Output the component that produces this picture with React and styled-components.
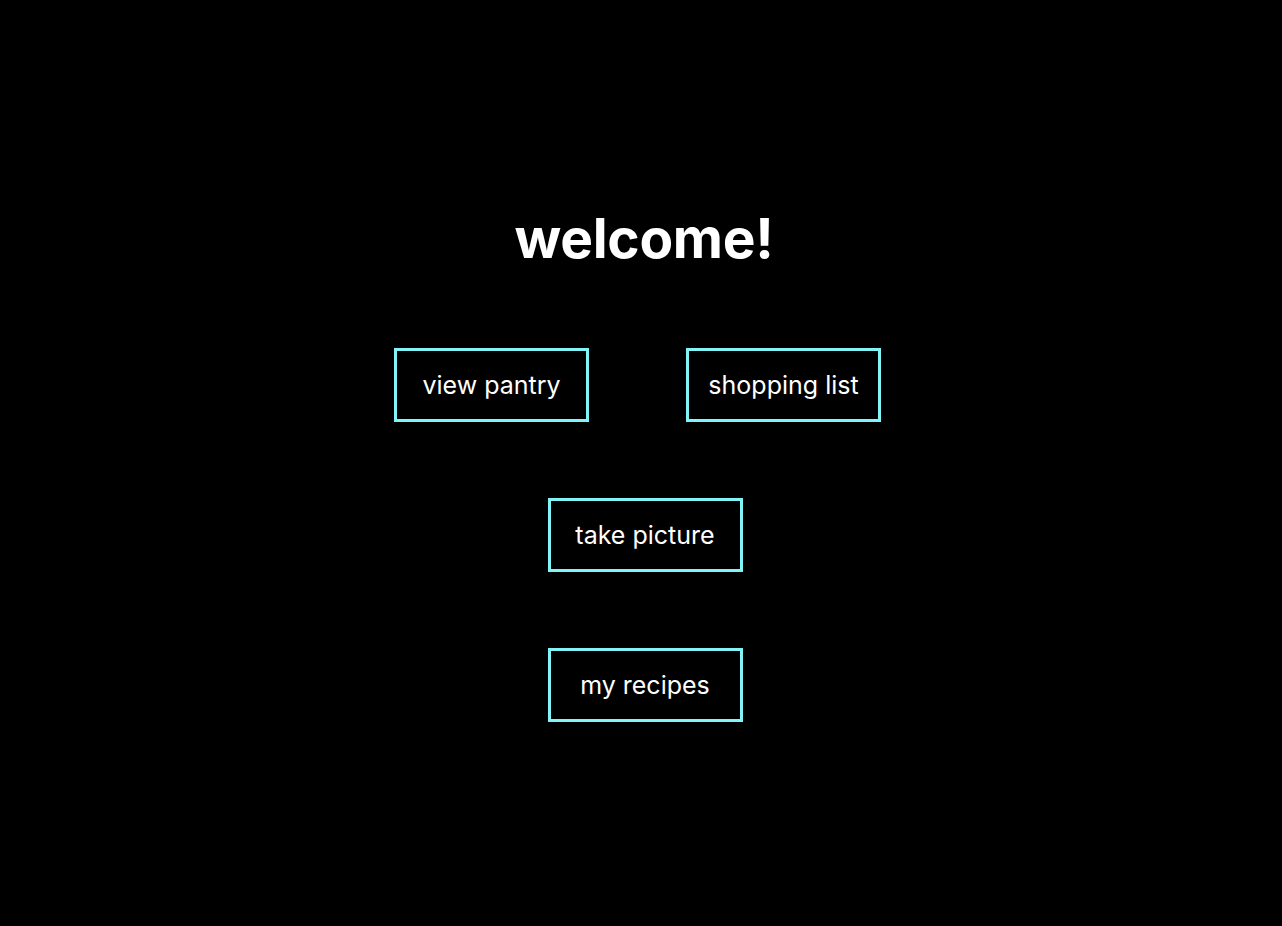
import React from 'react';
import styled, { createGlobalStyle } from 'styled-components';

const GlobalStyle = createGlobalStyle`
  html, body {
    margin: 0;
    padding: 0;
    background: #000;
  }
  body {
    font-family: 'Inter', 'Liberation Sans', sans-serif;
    color: #fff;
  }
`;

const Page = styled.div`
  width: 100%;
  min-height: 926px;
  background: #000;
  display: flex;
  flex-direction: column;
  align-items: center;
  padding-top: 203px;
  box-sizing: border-box;
`;

const Title = styled.h1`
  margin: 0 0 75px 6px;
  font-size: 55px;
  font-weight: 700;
  line-height: 70px;
  letter-spacing: -0.3px;
`;

const Menu = styled.div`
  display: flex;
  flex-direction: column;
  align-items: center;
  gap: 76px;
`;

const Row = styled.div`
  display: flex;
  gap: 97px;
  margin-left: ${(p) => p.$shift || 0}px;
`;

const MenuButton = styled.button`
  width: 195px;
  height: 74px;
  box-sizing: border-box;
  background: #000;
  border: 3px solid #80f4f6;
  color: #fff;
  font-family: 'Inter', 'Liberation Sans', sans-serif;
  font-size: 25px;
  font-weight: 400;
  cursor: pointer;
  padding: 0;
`;

export default function App() {
  return (
    <>
      <GlobalStyle />
      <Page>
        <Title>welcome!</Title>
        <Menu>
          <Row $shift={-7}>
            <MenuButton>view pantry</MenuButton>
            <MenuButton>shopping list</MenuButton>
          </Row>
          <Row $shift={8}>
            <MenuButton>take picture</MenuButton>
          </Row>
          <Row $shift={8}>
            <MenuButton>my recipes</MenuButton>
          </Row>
        </Menu>
      </Page>
    </>
  );
}
